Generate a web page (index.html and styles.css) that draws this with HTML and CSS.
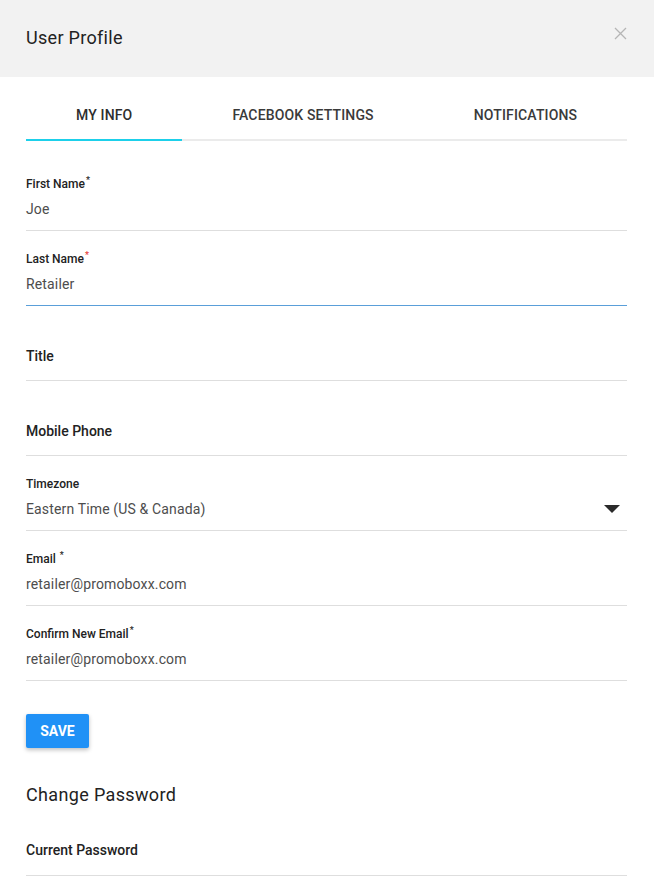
FILE: index.html
```html
<!DOCTYPE html>
<html>
<head>
<meta charset="utf-8">
<link rel="stylesheet" href="styles.css">
</head>
<body>
<div class="modal">
  <header class="modal-header">
    <h1 class="modal-title">User Profile</h1>
    <button class="close" aria-label="Close">
      <svg width="13" height="13" viewBox="0 0 13 13"><path d="M1 1L12 12M12 1L1 12" stroke="#b5b5b5" stroke-width="1.3" fill="none"/></svg>
    </button>
  </header>
  <div class="modal-body">
    <nav class="tabs">
      <div class="tab active">MY INFO</div>
      <div class="tab">FACEBOOK SETTINGS</div>
      <div class="tab">NOTIFICATIONS</div>
    </nav>
    <form class="form">
      <div class="field">
        <label class="label">First Name<sup class="req">*</sup></label>
        <div class="value">Joe</div>
      </div>
      <div class="field focused">
        <label class="label">Last Name<sup class="req red">*</sup></label>
        <div class="value">Retailer</div>
      </div>
      <div class="field empty">
        <label class="placeholder">Title</label>
      </div>
      <div class="field empty">
        <label class="placeholder">Mobile Phone</label>
      </div>
      <div class="field">
        <label class="label">Timezone</label>
        <div class="value select">
          <span>Eastern Time (US &amp; Canada)</span>
          <span class="caret"></span>
        </div>
      </div>
      <div class="field">
        <label class="label">Email <sup class="req">*</sup></label>
        <div class="value">retailer@promoboxx.com</div>
      </div>
      <div class="field">
        <label class="label">Confirm New Email<sup class="req">*</sup></label>
        <div class="value">retailer@promoboxx.com</div>
      </div>
      <div class="actions">
        <button type="button" class="btn-save">SAVE</button>
      </div>
      <h2 class="section-title">Change Password</h2>
      <div class="field empty pw">
        <label class="placeholder">Current Password</label>
      </div>
    </form>
  </div>
</div>
</body>
</html>
```
FILE: styles.css
```css
html, body {
  margin: 0;
  padding: 0;
  overflow: hidden;
  background: #fff;
}
body {
  font-family: Roboto, "Liberation Sans", Arial, sans-serif;
  color: #212121;
}
.modal {
  width: 654px;
}
.modal-header {
  height: 77px;
  background: #f2f2f2;
  display: flex;
  align-items: flex-start;
  justify-content: space-between;
  padding: 0 26px 0 26px;
  box-sizing: border-box;
}
.modal-title {
  margin: 0;
  font-size: 18px;
  font-weight: 400;
  letter-spacing: 0.3px;
  line-height: 24px;
  padding-top: 26px;
  color: #222;
}
.close {
  border: 0;
  background: none;
  padding: 0;
  margin: 27px 1px 0 0;
  width: 13px;
  height: 13px;
  display: flex;
}
.modal-body {
  padding: 14px 27px 0 26px;
}
.tabs {
  display: flex;
  border-bottom: 2px solid #ebebeb;
}
.tab {
  padding: 0 50px;
  font-size: 14px;
  font-weight: 500;
  letter-spacing: 0.15px;
  line-height: 48px;
  color: #3a3a3a;
  margin-bottom: -2px;
  border-bottom: 2px solid transparent;
  white-space: nowrap;
}
.tab.active {
  border-bottom-color: #1dd0ea;
  color: #2e2e2e;
}
.form {
  margin: 15px 0 0;
  display: flex;
  flex-direction: column;
}
.field {
  padding: 20px 0 11px;
  border-bottom: 1px solid #dedede;
}
.field.focused {
  border-bottom-color: #5a9fd9;
}
.label {
  display: block;
  font-size: 12px;
  font-weight: 500;
  line-height: 16px;
  color: #222;
}
.req {
  font-size: 9px;
  line-height: 0;
  vertical-align: 5px;
  margin-left: 1px;
  color: #222;
}
.req.red {
  color: #e53935;
}
.value {
  margin-top: 7px;
  font-size: 14px;
  letter-spacing: 0.15px;
  line-height: 20px;
  color: #4d4d4d;
}
.value.select {
  display: flex;
  justify-content: space-between;
  align-items: center;
}
.caret {
  width: 0;
  height: 0;
  border-left: 8px solid transparent;
  border-right: 8px solid transparent;
  border-top: 8px solid #2a2a2a;
  margin-right: 7px;
}
.field.empty {
  padding: 40px 0 14px;
}
.field.pw {
  padding: 33px 0 15px;
}
.placeholder {
  display: block;
  font-size: 14px;
  font-weight: 500;
  line-height: 20px;
  color: #222;
}
.actions {
  margin-top: 33px;
  display: flex;
}
.btn-save {
  width: 63px;
  height: 34px;
  border: 0;
  border-radius: 2px;
  background: #2091f6;
  color: #fff;
  font-family: Roboto, "Liberation Sans", Arial, sans-serif;
  font-size: 14px;
  font-weight: 700;
  padding: 0;
  box-shadow: 0 2px 4px rgba(0,0,0,0.25);
}
.section-title {
  margin: 35px 0 0;
  font-size: 18px;
  font-weight: 400;
  letter-spacing: 0.35px;
  line-height: 24px;
  color: #222;
}
```
